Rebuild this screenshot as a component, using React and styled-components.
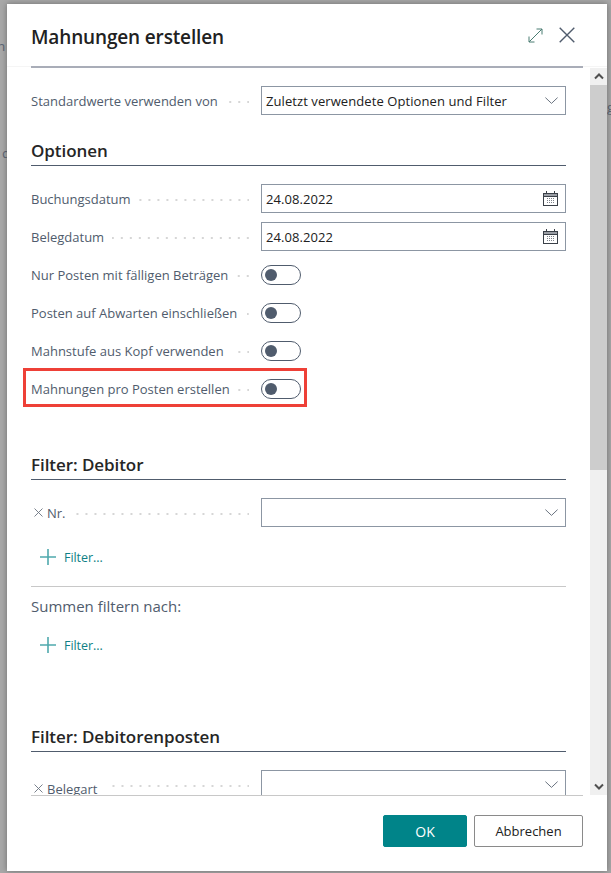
import React from "react";
import styled, { createGlobalStyle } from "styled-components";

const Global = createGlobalStyle`
  html, body { margin: 0; padding: 0; }
  body { width: 611px; height: 873px; overflow: hidden; background: #a6a6a6; font-family: "Open Sans", "Noto Sans", sans-serif; }
`;
const Page = styled.div`
  position: relative; width: 611px; height: 873px; overflow: hidden; box-sizing: border-box;
  padding: 4px 4px 2px 7px; background: #a8a8a8;
`;
const BackText = styled.span`
  position: absolute; font-size: 13.5px; color: #5d6675; left: ${p => p.$x}px; top: ${p => p.$y}px;
`;
const Dialog = styled.div`
  position: relative; display: flex; flex-direction: column; height: 100%; background: #fff;
  box-shadow: 0 0 6px rgba(0,0,0,.35);
`;
const Header = styled.div`
  display: flex; align-items: center; justify-content: space-between; height: 62px; padding: 0 32px 0 24px; flex: none; box-sizing: border-box;
`;
const Title = styled.h1`
  margin: 4px 0 0; font-size: 19px; font-weight: 600; color: #212121; letter-spacing: -.15px;
`;
const HeaderIcons = styled.div`display: flex; align-items: center; gap: 16px;`;
const HeaderRule = styled.div`
  flex: none; padding: 0 24px; background: linear-gradient(#f5f5f5 1px, #fff 1px);
  &::before { content: ""; display: block; height: 2px; background: #a9adb8; }
`;
const Body = styled.div`flex: 1; display: flex; min-height: 0;`;
const Scroll = styled.div`
  flex: 1; overflow: hidden; padding: 18px 24px 0; min-width: 0; display: flex; flex-direction: column;
`;
const Bar = styled.div`
  flex: none; width: 17px; display: flex; flex-direction: column; background: #f0f0f0;
`;
const BarBtn = styled.div`
  height: 17px; display: flex; align-items: center; justify-content: center; flex: none;
`;
const Thumb = styled.div`height: 385px; background: #cdcdcd; flex: none;`;
const Spacer = styled.div`flex: 1;`;
const Row = styled.div`
  position: relative; display: flex; align-items: center; height: 29px; flex: none;
  margin-top: ${p => p.$top || 0}px;
`;
const Lead = styled.div`
  display: flex; align-items: center; flex: none; padding-top: ${p => p.$drop || 0}px;
`;
const Label = styled.span`
  font-size: 13px; color: #505c6d; white-space: nowrap; flex: none; letter-spacing: 0;
`;
const RemoveX = styled.svg`width: 9px; height: 9px; margin: 0 4px 0 3px; flex: none;`;
const Dots = styled.span`
  flex: 1; height: 2px; margin: 3px 12px 0 8px; min-width: 0;
  background-image: linear-gradient(to left, #d6d6d6 2px, transparent 2px);
  background-size: 9px 2px; background-position: right; background-repeat: repeat-x;
`;
const Field = styled.div`
  flex: none; width: 305px; height: 29px; box-sizing: border-box; border: 1px solid #8c96a3;
  display: flex; align-items: center; justify-content: space-between; padding: 0 7px 0 4px;
  font-size: 13px; color: #212121; background: #fff; letter-spacing: .08px;
`;
const SwitchSlot = styled.div`flex: none; width: 305px; display: flex; align-items: center;`;
const Toggle = styled.div`
  width: 40px; height: 20px; box-sizing: border-box; border: 1px solid #505c6d; border-radius: 10px;
  display: flex; align-items: center; padding-left: 3px; background: #fff;
`;
const Knob = styled.div`width: 12px; height: 12px; border-radius: 50%; background: #505c6d;`;
const Highlight = styled.div`
  position: absolute; left: -8px; top: -6px; width: 284px; height: 39px; box-sizing: border-box;
  border: 3px solid #ee4037; pointer-events: none;
`;
const Section = styled.h2`
  margin: ${p => p.$top}px 0 0; font-size: 17px; line-height: 23px; font-weight: 600; color: #262626; flex: none;
  padding-bottom: 3px; border-bottom: 1px solid #505c6d; letter-spacing: -.07px;
`;
const AddFilter = styled.div`
  display: flex; align-items: center; gap: 8px; height: 20px; margin: ${p => p.$top}px 0 0 9px; flex: none;
  font-size: 12.5px; color: #0f7f86; letter-spacing: -.05px;
`;
const Divider = styled.div`height: 1px; background: #c8c8c8; margin-top: 19px; flex: none;`;
const SumLabel = styled.div`
  font-size: 15px; line-height: 20px; color: #505c6d; margin-top: 9px; flex: none;
`;
const Footer = styled.div`
  flex: none; margin: 0 24px; border-top: 1px solid #c8c8c8; height: 76px; box-sizing: border-box;
  display: flex; justify-content: flex-end; gap: 7px; padding-top: 19px;
`;
const Button = styled.button`
  height: 32px; width: ${p => p.$w}px; box-sizing: border-box; border-radius: 2px; font: inherit; font-size: ${p => p.$primary ? 14 : 13}px; padding: 0;
  border: 1px solid ${p => p.$primary ? "#008489" : "#8a8a8a"};
  background: ${p => p.$primary ? "#008489" : "#fff"};
  color: ${p => p.$primary ? "#fff" : "#212121"};
`;

const Chevron = () => (
  <svg width="13" height="7" viewBox="0 0 13 7"><path d="M.4.6 6.5 6.4 12.6.6" fill="none" stroke="#6b7480" strokeWidth="1" /></svg>
);
const Calendar = () => (
  <svg width="15" height="15" viewBox="0 0 15 15" shapeRendering="crispEdges">
    <path d="M.5 2.5h14v12H.5z" fill="#fff" stroke="#3a4048" />
    <path d="M.5 5.5h14" stroke="#3a4048" />
    <path d="M1 3.5h13M1 4.5h13" stroke="#9a9ea5" />
    <path d="M3.5 0v3M11.5 0v3" stroke="#3a4048" />
    <path d="M4 7.5h8M4 9.5h8M4 11.5h8" stroke="#7d828a" strokeDasharray="1 1" />
  </svg>
);
const Plus = () => (
  <svg width="16" height="16" viewBox="0 0 16 16"><path d="M8 0v16M0 8h16" stroke="#4fa9ad" strokeWidth="1.6" /></svg>
);
const X = () => (
  <RemoveX viewBox="0 0 9 9"><path d="M.5.5l8 8M8.5.5l-8 8" stroke="#6b7480" strokeWidth=".9" /></RemoveX>
);

const SwitchRow = ({ label, top, mark }) => (
  <Row $top={top}>
    <Label>{label}</Label><Dots />
    <SwitchSlot><Toggle><Knob /></Toggle></SwitchSlot>
    {mark && <Highlight />}
  </Row>
);
const DateRow = ({ label, top }) => (
  <Row $top={top}>
    <Label>{label}</Label><Dots />
    <Field>24.08.2022<Calendar /></Field>
  </Row>
);

export default function App() {
  return (
    <Page>
      <Global />
      <BackText $x={-3} $y={37}>n</BackText>
      <BackText $x={2} $y={144}>d</BackText>
      <BackText $x={607} $y={98}>g</BackText>
      <Dialog>
        <Header>
          <Title>Mahnungen erstellen</Title>
          <HeaderIcons>
            <svg width="15" height="15" viewBox="0 0 15 15" fill="none">
              <path d="M1 14 14 1M8.5 1H14v5.5M1 8.5V14h5.5" stroke="#4a7d72" strokeWidth="1" />
            </svg>
            <svg width="16" height="16" viewBox="0 0 16 16" fill="none">
              <path d="M.7.7l14.6 14.6M15.3.7.7 15.3" stroke="#505c6d" strokeWidth="1.4" />
            </svg>
          </HeaderIcons>
        </Header>
        <HeaderRule />
        <Body>
          <Scroll>
            <Row>
              <Label>Standardwerte verwenden von</Label><Dots />
              <Field>Zuletzt verwendete Optionen und Filter<Chevron /></Field>
            </Row>
            <Section $top={24}>Optionen</Section>
            <DateRow label="Buchungsdatum" top={18} />
            <DateRow label="Belegdatum" top={9} />
            <SwitchRow label="Nur Posten mit fälligen Beträgen" top={9} />
            <SwitchRow label="Posten auf Abwarten einschließen" top={9} />
            <SwitchRow label="Mahnstufe aus Kopf verwenden" top={9} />
            <SwitchRow label="Mahnungen pro Posten erstellen" top={9} mark />
            <Section $top={50}>Filter: Debitor</Section>
            <Row $top={18}>
              <Lead><X /><Label>Nr.</Label></Lead><Dots />
              <Field><span /><Chevron /></Field>
            </Row>
            <AddFilter $top={20}><Plus />Filter...</AddFilter>
            <Divider />
            <SumLabel>Summen filtern nach:</SumLabel>
            <AddFilter $top={19}><Plus />Filter...</AddFilter>
            <Section $top={70}>Filter: Debitorenposten</Section>
            <Row $top={18}>
              <Lead $drop={8}><X /><Label>Belegart</Label></Lead><Dots />
              <Field><span /><Chevron /></Field>
            </Row>
          </Scroll>
          <Bar>
            <BarBtn>
              <svg width="10" height="7" viewBox="0 0 10 7"><path d="M1 5.5 5 1.5l4 4" fill="none" stroke="#505050" strokeWidth="2" /></svg>
            </BarBtn>
            <Thumb />
            <Spacer />
            <BarBtn>
              <svg width="10" height="7" viewBox="0 0 10 7"><path d="M1 1.5l4 4 4-4" fill="none" stroke="#505050" strokeWidth="2" /></svg>
            </BarBtn>
          </Bar>
        </Body>
        <Footer>
          <Button $primary $w={84}>OK</Button>
          <Button $w={109}>Abbrechen</Button>
        </Footer>
      </Dialog>
    </Page>
  );
}
